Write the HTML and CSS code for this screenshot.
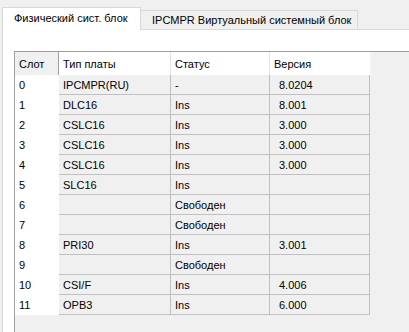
FILE: index.html
```html
<!DOCTYPE html>
<html lang="ru">
<head>
    <meta charset="UTF-8">
    <title>Системный блок</title>
    <link rel="stylesheet" href="styles.css">
</head>
<body>

    <!-- Tabs -->
    <div class="tabs">
        <div class="tab active">Физический сист. блок</div>
        <div class="tab">IPCMPR Виртуальный системный блок</div>
    </div>

    <!-- Tab page -->
    <div class="page">
        <div class="grid">
            <table class="slots">
                <colgroup>
                    <col class="col-slot">
                    <col class="col-type">
                    <col class="col-status">
                    <col class="col-version">
                </colgroup>
                <thead>
                    <tr>
                        <th class="corner">Слот</th>
                        <th>Тип платы</th>
                        <th>Статус</th>
                        <th>Версия</th>
                    </tr>
                </thead>
                <tbody id="slotRows"></tbody>
            </table>
        </div>
    </div>

    <script>
        const slots = [
            ['0', 'IPCMPR(RU)', '-', '8.0204'],
            ['1', 'DLC16', 'Ins', '8.001'],
            ['2', 'CSLC16', 'Ins', '3.000'],
            ['3', 'CSLC16', 'Ins', '3.000'],
            ['4', 'CSLC16', 'Ins', '3.000'],
            ['5', 'SLC16', 'Ins', ''],
            ['6', '', 'Свободен', ''],
            ['7', '', 'Свободен', ''],
            ['8', 'PRI30', 'Ins', '3.001'],
            ['9', '', 'Свободен', ''],
            ['10', 'CSI/F', 'Ins', '4.006'],
            ['11', 'OPB3', 'Ins', '6.000']
        ];

        const rows = document.getElementById('slotRows');
        slots.forEach(slot => {
            const tr = document.createElement('tr');
            tr.innerHTML = `<td class="num">${slot[0]}</td>
                <td>${slot[1]}</td>
                <td>${slot[2]}</td>
                <td class="ver">${slot[3]}</td>`;
            rows.appendChild(tr);
        });
    </script>
</body>
</html>
```

FILE: styles.css
```css
html, body {
    height: 100%;
}

body {
    margin: 0;
    background-color: #f0f0f0;
    font-family: "Liberation Sans", Arial, sans-serif;
    font-size: 11px;
    color: #000;
    display: flex;
    flex-direction: column;
    overflow: hidden;
}

.tabs {
    display: flex;
    align-items: flex-end;
    padding: 7px 0 0 2px;
    position: relative;
    z-index: 1;
}

.tab {
    box-sizing: border-box;
    height: 19px;
    line-height: 18px;
    padding: 0 10px 0 11px;
    border: 1px solid #d9d9d9;
    border-bottom: none;
    background: #f0f0f0;
    white-space: nowrap;
}

.tab.active {
    width: 139px;
    height: 23px;
    line-height: 20px;
    background: #fff;
    margin-bottom: -1px;
}

.tab + .tab {
    width: 217px;
    border-left: none;
}

.page {
    flex: 1;
    margin-left: 2px;
    border-top: 1px solid #d9d9d9;
    border-left: 1px solid #d9d9d9;
    background: #fff;
    padding: 21px 0 0 11px;
    display: flex;
}

.grid {
    flex: 1;
    background: #f0f0f0;
    border-top: 1px solid #a0a0a0;
    border-left: 1px solid #a0a0a0;
}

.slots {
    table-layout: fixed;
    width: 355px;
    border-collapse: separate;
    border-spacing: 0;
}

.col-slot { width: 44px; }
.col-type { width: 112px; }
.col-status { width: 99px; }
.col-version { width: 100px; }

.slots th {
    height: 23px;
    padding: 0 0 0 4px;
    text-align: left;
    font-weight: normal;
    background: #fff;
    border-right: 1px solid #e3e3e3;
}

.slots th.corner {
    background: #f0f0f0;
    border-right: 1px solid #a0a0a0;
}

.slots th:last-child {
    border-right: none;
}

.slots td {
    height: 19px;
    padding: 0 0 0 4px;
    background: #f0f0f0;
    border-right: 1px solid #c0c0c0;
    border-bottom: 1px solid #c0c0c0;
    white-space: nowrap;
    overflow: hidden;
}

.slots td.num {
    background: #fff;
    border-right: none;
    border-bottom: 1px solid #fff;
    padding-left: 4px;
}

.slots td.ver {
    padding-left: 9px;
}
```
